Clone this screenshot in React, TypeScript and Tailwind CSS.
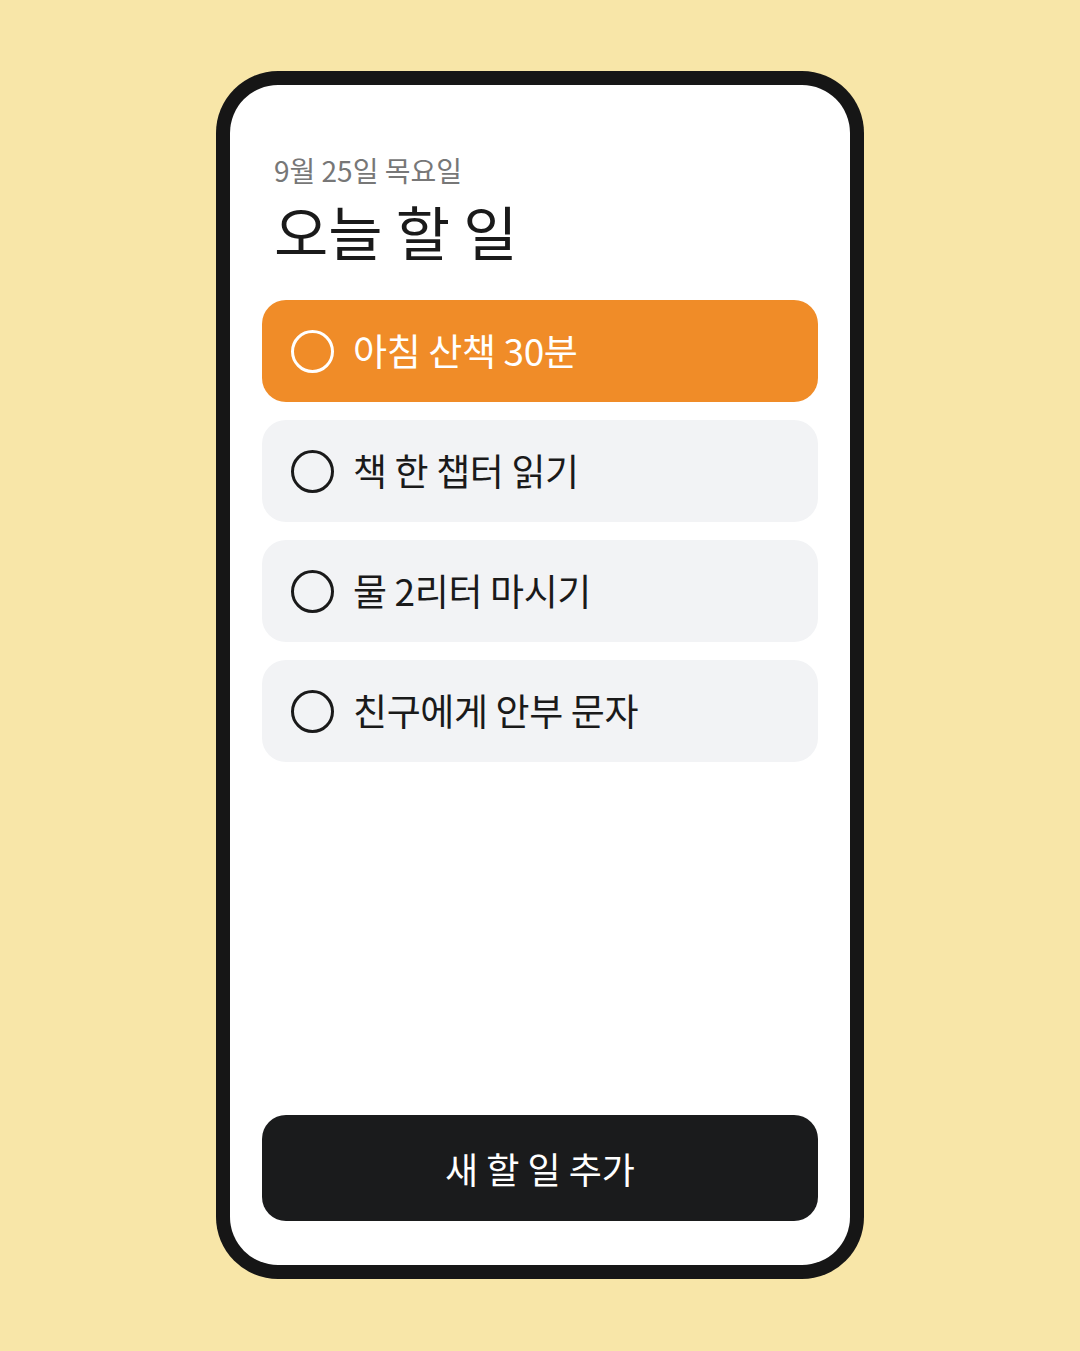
import { useState } from 'react';

const FONT = { fontFamily: '"Noto Sans CJK KR", "Noto Sans", sans-serif' };

const tasks = [
    { id: 1, title: '아침 산책 30분', active: true },
    { id: 2, title: '책 한 챕터 읽기', active: false },
    { id: 3, title: '물 2리터 마시기', active: false },
    { id: 4, title: '친구에게 안부 문자', active: false },
];

const TaskRow = ({ title, active }: { title: string; active: boolean }) => {
    return (
        <div
            className={`flex items-center h-[102px] rounded-[24px] px-[29px] gap-[19px] ${
                active ? 'bg-[#f08c28] text-white' : 'bg-[#f2f3f5] text-[#1a1a1a]'
            }`}
        >
            {/* Check circle */}
            <span
                className={`w-[43px] h-[43px] shrink-0 rounded-full border-[3.5px] ${
                    active ? 'border-white' : 'border-[#1a1a1a]'
                }`}
            />
            <span className="text-[37px] leading-none tracking-[-0.01em] mt-[-2px]">{title}</span>
        </div>
    );
};

export default function App() {
    const [items] = useState(tasks);

    return (
        <div className="min-h-[1351px] w-full bg-[#f8e6a8] flex justify-center pt-[71px]" style={FONT}>
            <div className="w-[648px] h-[1208px] rounded-[62px] bg-[#161616] p-[14px]">
                <div className="w-full h-full rounded-[48px] bg-white flex flex-col px-[32px] pt-[71px] pb-[44px]">
                    <div className="px-[12px]">
                        <p className="text-[28px] leading-none text-[#777777]">9월 25일 목요일</p>
                        <h1 className="text-[59px] leading-none text-[#1a1a1a] mt-[17px]">오늘 할 일</h1>
                    </div>

                    <div className="flex flex-col gap-[18px] mt-[40px]">
                        {items.map((t) => (
                            <TaskRow key={t.id} title={t.title} active={t.active} />
                        ))}
                    </div>

                    <button className="mt-auto h-[106px] w-full rounded-[24px] bg-[#1a1b1c] text-white text-[36px] leading-none">
                        새 할 일 추가
                    </button>
                </div>
            </div>
        </div>
    );
}
